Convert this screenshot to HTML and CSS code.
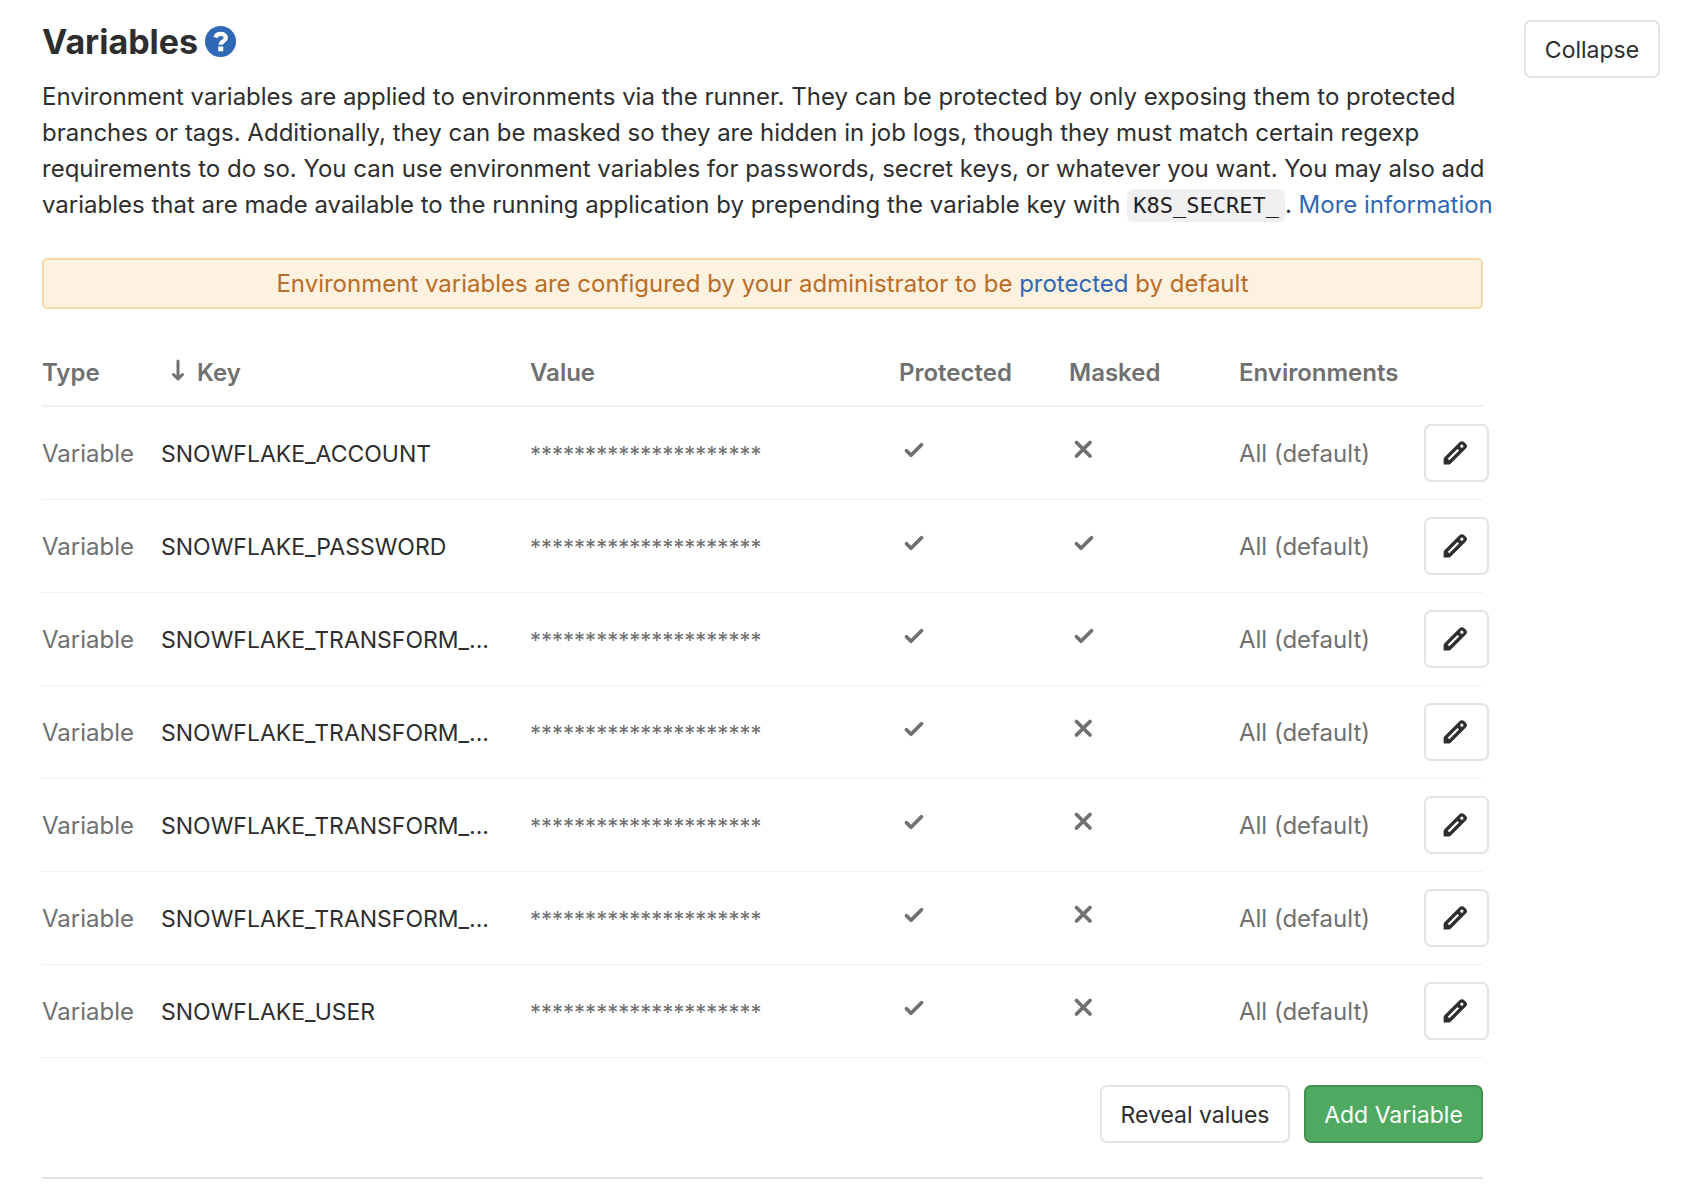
FILE: index.html
```html
<!DOCTYPE html>
<html lang="en">
<head>
<meta charset="utf-8">
<title>Variables</title>
<link rel="stylesheet" href="styles.css">
</head>
<body>
<svg class="sprite" aria-hidden="true">
  <symbol id="check" viewBox="0 0 16 16"><path d="M3 8.500l3 3L13 4.500" fill="none" stroke="currentColor" stroke-width="2.500" stroke-linecap="round" stroke-linejoin="round"/></symbol>
  <symbol id="close" viewBox="0 0 16 16"><path d="M3 3l9 9M12 3L3 12" fill="none" stroke="currentColor" stroke-width="2.500" stroke-linecap="round"/></symbol>
  <symbol id="pencil" viewBox="0 0 16 16"><path fill="currentColor" fill-rule="evenodd" d="M12.240.72a2.100 2.100 0 0 1 1.480.6l.960.960a2.100 2.100 0 0 1 0 2.960L5.300 14.620a1.300 1.300 0 0 1-.92.380H1V11.620c0-.34.140-.68.380-.92L10.760 1.320a2.100 2.100 0 0 1 1.480-.6zM9.500 5.500L3.500 11.500l1 1 6-6zM12.200 2.800a1 1 0 1 0 0 2 1 1 0 0 0 0-2z"/></symbol>
</svg>
<main class="settings">
  <section class="content">
    <h1 class="title">Variables
      <a class="help" href="#help" aria-label="Help"><svg viewBox="0 0 31 31"><circle cx="15.500" cy="15.500" r="15.500" fill="currentColor"/><path d="M10.500 11.500C11.500 6.800 20.800 6.600 20.800 11.700c0 3.700-5.100 3.400-5.100 7" fill="none" stroke="#fff" stroke-width="4.200"/><path d="M13.200 20.500h5v4.800h-5z" fill="#fff"/></svg></a>
    </h1>
    <p class="intro">Environment variables are applied to environments via the runner. They can be protected by only exposing them to protected branches or tags. Additionally, they can be masked so they are hidden in job logs, though they must match certain regexp requirements to do so. You can use environment variables for passwords, secret keys, or whatever you want. You may also add variables that are made available to the running application by prepending the variable key with <code>K8S_SECRET_</code>. <a href="#more">More information</a></p>
    <p class="notice">Environment variables are configured by your administrator to be <a href="#protected">protected</a> by default</p>
    <table class="variables">
      <colgroup><col class="col-type"><col><col><col class="col-flag"><col class="col-flag"><col class="col-env"><col class="col-edit"></colgroup>
      <thead>
        <tr><th>Type</th><th class="sorted"><svg class="arrow" viewBox="0 0 14 22"><path d="M7 2v18M2.500 15.500l4.500 4.500 4.500-4.500" fill="none" stroke="currentColor" stroke-width="3" stroke-linecap="round" stroke-linejoin="round"/></svg>Key</th><th>Value</th><th>Protected</th><th>Masked</th><th>Environments</th><th aria-label="Actions"></th></tr>
      </thead>
      <tbody>
        <tr><td>Variable</td><td class="key">SNOWFLAKE_ACCOUNT</td><td class="value">*********************</td><td><svg class="flag"><use href="#check"/></svg></td><td><svg class="flag"><use href="#close"/></svg></td><td>All (default)</td><td><button class="btn edit" aria-label="Edit"><svg><use href="#pencil"/></svg></button></td></tr>
        <tr><td>Variable</td><td class="key">SNOWFLAKE_PASSWORD</td><td class="value">*********************</td><td><svg class="flag"><use href="#check"/></svg></td><td><svg class="flag"><use href="#check"/></svg></td><td>All (default)</td><td><button class="btn edit" aria-label="Edit"><svg><use href="#pencil"/></svg></button></td></tr>
        <tr><td>Variable</td><td class="key">SNOWFLAKE_TRANSFORM_...</td><td class="value">*********************</td><td><svg class="flag"><use href="#check"/></svg></td><td><svg class="flag"><use href="#check"/></svg></td><td>All (default)</td><td><button class="btn edit" aria-label="Edit"><svg><use href="#pencil"/></svg></button></td></tr>
        <tr><td>Variable</td><td class="key">SNOWFLAKE_TRANSFORM_...</td><td class="value">*********************</td><td><svg class="flag"><use href="#check"/></svg></td><td><svg class="flag"><use href="#close"/></svg></td><td>All (default)</td><td><button class="btn edit" aria-label="Edit"><svg><use href="#pencil"/></svg></button></td></tr>
        <tr><td>Variable</td><td class="key">SNOWFLAKE_TRANSFORM_...</td><td class="value">*********************</td><td><svg class="flag"><use href="#check"/></svg></td><td><svg class="flag"><use href="#close"/></svg></td><td>All (default)</td><td><button class="btn edit" aria-label="Edit"><svg><use href="#pencil"/></svg></button></td></tr>
        <tr><td>Variable</td><td class="key">SNOWFLAKE_TRANSFORM_...</td><td class="value">*********************</td><td><svg class="flag"><use href="#check"/></svg></td><td><svg class="flag"><use href="#close"/></svg></td><td>All (default)</td><td><button class="btn edit" aria-label="Edit"><svg><use href="#pencil"/></svg></button></td></tr>
        <tr><td>Variable</td><td class="key">SNOWFLAKE_USER</td><td class="value">*********************</td><td><svg class="flag"><use href="#check"/></svg></td><td><svg class="flag"><use href="#close"/></svg></td><td>All (default)</td><td><button class="btn edit" aria-label="Edit"><svg><use href="#pencil"/></svg></button></td></tr>
      </tbody>
    </table>
    <div class="actions">
      <button class="btn reveal">Reveal values</button>
      <button class="btn primary">Add Variable</button>
    </div>
  </section>
  <button class="btn collapse">Collapse</button>
</main>
</body>
</html>
```
FILE: styles.css
```css
* { box-sizing: border-box; }
body {
  margin: 0;
  background: #fff;
  color: #2e2e2e;
  font: 24px/36px Inter, "Liberation Sans", sans-serif;
}
a { color: #2f68b4; text-decoration: none; }
.sprite { display: none; }
.settings {
  display: flex;
  align-items: flex-start;
  gap: 41px;
  padding: 20px 26px 23px 42px;
}
.content {
  flex: 1;
  min-width: 0;
  border-bottom: 2px solid #e3e3e3;
}
.title {
  display: flex;
  align-items: center;
  gap: 7px;
  margin: 0 0 16px;
  font-size: 34px;
  line-height: 43px;
  font-weight: 700;
}
.help, .help svg { display: block; width: 31px; height: 31px; }
.intro { margin: 0 -20px 35px 0; }
code {
  padding: 4px 6px;
  border-radius: 6px;
  background: #f0f0f0;
  color: #1f1f1f;
  font: 22px/26px "DejaVu Sans Mono", monospace;
}
.notice {
  margin: 0 0 36px;
  padding: 6px;
  border: 2px solid #f5d9a8;
  border-radius: 5px;
  background: #fdf1df;
  color: #b96d26;
  line-height: 35px;
  text-align: center;
}
.variables {
  width: 100%;
  border-collapse: separate;
  border-spacing: 0;
  table-layout: fixed;
  color: #707070;
}
.col-type { width: 119px; }
.col-flag { width: 170px; }
.col-env { width: 185px; }
.col-edit { width: 59px; }
th {
  height: 62px;
  padding: 0 0 5px;
  border-bottom: 2px solid #f0f0f0;
  font-weight: 600;
  text-align: left;
  white-space: nowrap;
}
td {
  height: 93px;
  padding: 2px 0 0;
  border-bottom: 1px solid #f0f0f0;
  white-space: nowrap;
}
td:last-child { padding: 0; }
.key { color: #2e2e2e; font-size: 23px; }
.value { font-size: 22px; }
.sorted { padding-left: 10px; }
.arrow { width: 14px; height: 22px; margin-right: 12px; }
.flag { display: block; width: 24px; height: 24px; margin: 0 0 8px 3px; }
.btn {
  height: 58px;
  padding: 2px 0 0;
  border: 2px solid #e3e3e3;
  border-radius: 7px;
  background: #fff;
  color: #2e2e2e;
  font: inherit;
  font-size: 23px;
  white-space: nowrap;
}
.collapse { width: 136px; }
.reveal { width: 190px; }
.edit {
  display: flex;
  align-items: center;
  justify-content: center;
  width: 65px;
  padding: 0 3px 0 0;
}
.edit svg { width: 26px; height: 26px; }
.actions {
  display: flex;
  justify-content: flex-end;
  gap: 14px;
  padding: 27px 0 34px;
}
.primary { width: 179px; border-color: #429150; background: #50a960; color: #fff; }
```
